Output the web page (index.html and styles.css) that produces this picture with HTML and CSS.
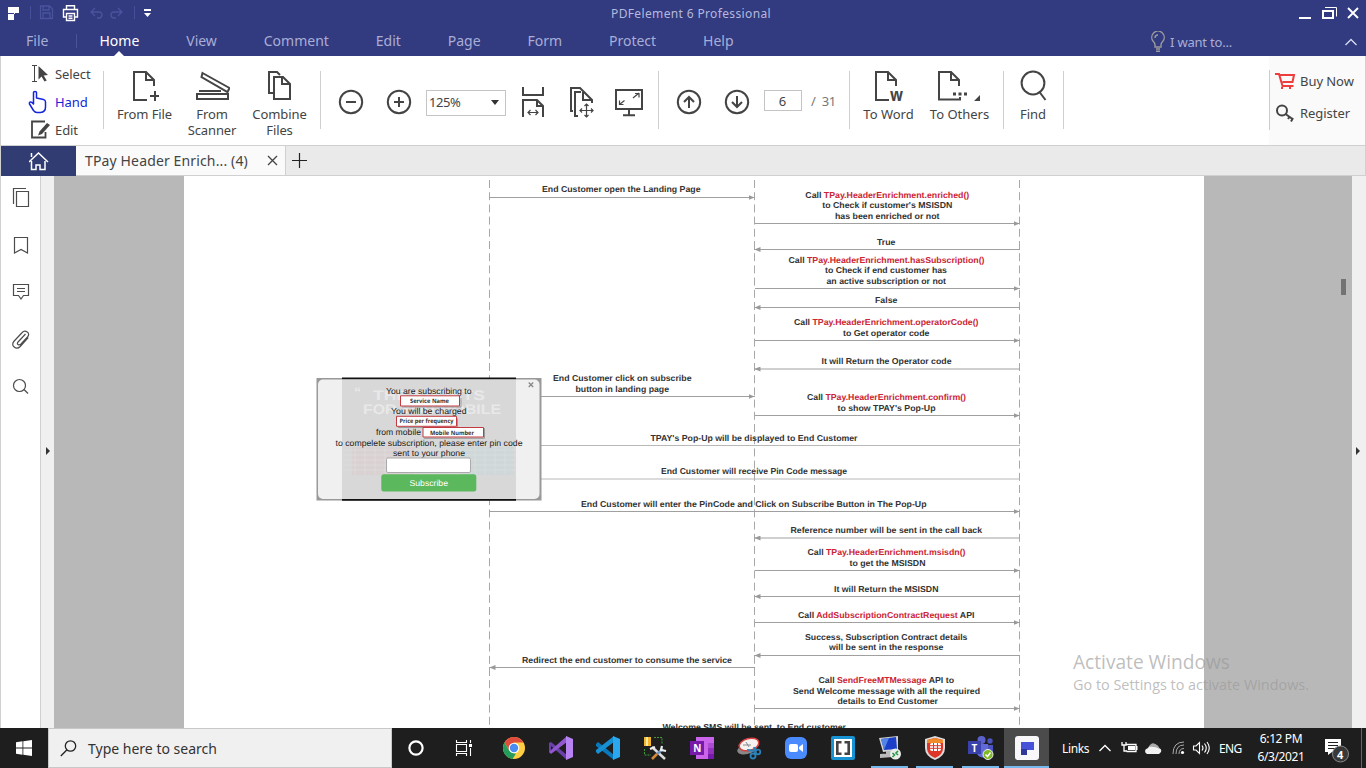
FILE: index.html
```html
<!DOCTYPE html>
<html lang="en">
<head>
<meta charset="utf-8">
<title>PDFelement 6 Professional</title>
<link rel="stylesheet" href="styles.css">
</head>
<body>
<div class="screen">
  <header class="titlebar">
    <svg class="quick" width="160" height="27" viewBox="0 0 160 27">
      <path fill="#fff" d="M8 7h11v6h-5v7H8v-6h7v-1H8z"/>
      <path stroke="#46509a" d="M30.500 6v13M134.500 6v13"/>
      <g fill="none" stroke="#4a549c" stroke-width="1.300"><path d="M40.500 6h9l3 3v9.500h-12zM43 6v4h6V6M43 18v-5h7v5M91 12h8q3 0 3 3t-3 3h-2M95 8l-4 4 4 4M122 12h-8q-3 0-3 3t3 3h2M118 8l4 4-4 4"/></g>
      <g fill="none" stroke="#fff" stroke-width="1.400"><path d="M66.500 9V5.700h8V9M66 17h-2.500V9.500h14V17H75M66.500 13.500h8v7h-8zM68.500 16h4M68.500 18.300h4"/></g>
      <path fill="#fff" d="M144 9h7v2h-7zM144 13h7l-3.500 4z"/>
    </svg>
    <div class="title">PDFelement 6 Professional</div>
    <svg class="winctl" width="68" height="27" viewBox="1298 0 68 27">
      <path fill="#fff" d="M1299 17h12v2h-12z"/>
      <path fill="none" stroke="#fff" stroke-width="2" d="M1323 11h10v7h-10z"/>
      <path fill="none" stroke="#fff" d="M1325 7.500h11.500v9"/>
      <path stroke="#fff" stroke-width="1.900" d="M1348 8l10 10M1358 8l-10 10"/>
    </svg>
  </header>
  <nav class="menubar">
    <span class="menu file">File</span><i class="menu-sep"></i>
    <span class="menu home">Home</span><span class="menu">View</span><span class="menu">Comment</span><span class="menu">Edit</span><span class="menu">Page</span><span class="menu">Form</span><span class="menu">Protect</span><span class="menu">Help</span>
    <div class="want">
      <svg width="16" height="22" viewBox="0 0 16 22"><path fill="none" stroke="#9a9a9a" stroke-width="1.400" d="M5 16v-2q0-2-2-4a6.200 6.200 0 1 1 10 0q-2 2-2 4v2zM5 7q0-3 3-3M6 18h4M6 20.300h4"/></svg>
      <span>I want to...</span>
    </div>
    <svg class="fold" width="14" height="8" viewBox="0 0 14 8"><path fill="none" stroke="#d8daec" stroke-width="1.400" d="M1.500 7 7 1.500 12.500 7"/></svg>
  </nav>

  <section class="ribbon">
    <div class="group modes">
      <div class="mode"><svg width="22" height="20" viewBox="28 64 22 20"><path fill="none" stroke="#444" d="M32 65.500h5M34.500 65.500v16M32 81.500h5"/><path fill="#444" d="M38.500 66l9.500 9-4.300.5 3 5-2.200 1-3-5-3 3z"/></svg>Select</div>
      <div class="mode active"><svg width="22" height="24" viewBox="28 90 22 24"><path fill="none" stroke="#1426d8" stroke-width="1.500" stroke-linejoin="round" d="M33.500 104V92.500q0-1 1.500-1t1.500 1V98l7 1.500q2 .5 2 2.500v5q0 5-5 5.500H37q-2 0-3.500-2l-4-6.500q-.5-2 1-2t3 2z"/></svg>Hand</div>
      <div class="mode"><svg width="22" height="20" viewBox="28 120 22 20"><path fill="none" stroke="#444" stroke-width="1.800" d="M45 121.500H32v16h13.500V132"/><path fill="#444" d="M47 123l3 2-8 9-4 1.500 1.500-4z"/></svg>Edit</div>
    </div>
    <div class="group create">
      <div class="tool"><svg width="28" height="32" viewBox="0 0 28 32"><path fill="none" stroke="#444" stroke-width="2" d="M16 30H3V2h12l8 8v6M15 2v8h8M24 21v10M19 26h10"/></svg><span>From File</span></div>
      <div class="tool"><svg width="36" height="32" viewBox="194 70 36 32"><path fill="none" stroke="#444" stroke-width="2" d="M197 94h31v5h-31zM199 91h22M202.500 73l27 15-2 4-26-15z"/></svg><span>From<br>Scanner</span></div>
      <div class="tool"><svg width="26" height="32" viewBox="267 70 26 32"><path fill="none" stroke="#444" stroke-width="2" d="M273 93h-4V72h8l3 3M274 77h9l7 7v15h-16zM282 77v7h8"/></svg><span>Combine<br>Files</span></div>
    </div>
    <div class="group zoom">
      <svg width="26" height="26" viewBox="0 0 26 26"><circle class="ln" cx="13" cy="13" r="11.200"/><path class="ln" d="M8 13h10"/></svg>
      <svg class="plus" width="26" height="26" viewBox="0 0 26 26"><circle class="ln" cx="13" cy="13" r="11.200"/><path class="ln" d="M8 13h10M13 8v10"/></svg>
      <div class="combo"><span>125%</span><svg width="8" height="5" viewBox="0 0 8 5"><path fill="#333" d="M0 0h8L4 5z"/></svg></div>
      <svg class="fit" width="32" height="34" viewBox="517 85 32 34"><path class="ln" d="M523 87v8h20v-8M523 117v-17h14l6 6v11M537 100v6h6"/><path class="thin" d="M528 112.500h10M530.500 110l-2.500 2.500 2.500 2.500M535.500 110l2.500 2.500-2.500 2.500"/></svg>
      <svg class="page-fit" width="32" height="34" viewBox="565 85 32 34"><path class="ln" d="M573 111h-2V88h9l12 12v3M578 116h-3V92h6M583 92v8h8"/><path class="thin" d="M580 110.500h13M586.500 104v13M582 108.500l-2 2 2 2M591 108.500l2 2-2 2M584.500 106l2-2 2 2M584.500 115l2 2 2-2"/></svg>
      <svg class="page-fit" width="32" height="34" viewBox="613 85 32 34"><path class="ln" d="M616 90h26v19h-26zM629 109v6M623 115.200h12"/><path class="thin" d="M619.500 104.500l5-4M619.500 100.500v4h4M633 98l6-5M635 93.500h4v4"/></svg>
    </div>
    <div class="group pages">
      <svg width="26" height="26" viewBox="0 0 26 26"><circle class="ln" cx="13" cy="13" r="11.200"/><path class="ln" d="M13 19V8M8 13l5-5 5 5"/></svg>
      <svg class="plus" width="26" height="26" viewBox="0 0 26 26"><circle class="ln" cx="13" cy="13" r="11.200"/><path class="ln" d="M13 7v11M8 13l5 5 5-5"/></svg>
      <div class="pageno">6</div><span class="total">/&nbsp; 31</span>
    </div>
    <div class="group convert">
      <div class="tool"><svg width="30" height="32" viewBox="0 0 30 32"><path class="ln" d="M15 30H2V2h12l8 8v6M14 2v8h8"/><text class="w" x="16" y="30.500" textLength="13" lengthAdjust="spacingAndGlyphs">w</text></svg><span>To Word</span></div>
      <div class="tool"><svg width="44" height="32" viewBox="1 0 44 32"><path class="ln" d="M23 27v2.500H2V2h12l8 8v6M14 2v8h8"/><path fill="#444" d="M16 22.500h3v3h-3zM21.500 22.500h3v3h-3zM27 22.500h3v3h-3zM43 25v6h-6z"/></svg><span>To Others</span></div>
    </div>
    <div class="group find">
      <div class="tool"><svg width="30" height="32" viewBox="0 0 30 32"><circle class="ln" cx="15" cy="13" r="11.400"/><path class="ln" d="M21.500 22l6 8"/></svg><span>Find</span></div>
    </div>
    <aside class="account">
      <div class="acct"><svg width="21" height="18" viewBox="1275 72 21 18"><path fill="none" stroke="#ee3d3d" stroke-width="2" d="M1275 74h4l3.500 12h11M1280 75h14l-1.500 7h-10"/><path fill="#ee3d3d" d="M1281 87h2v2h-2zM1289 87h2v2h-2z"/></svg>Buy Now</div>
      <div class="acct"><svg width="21" height="18" viewBox="1275 103 21 18"><circle fill="none" stroke="#444" stroke-width="2" cx="1282" cy="109.500" r="5"/><path fill="none" stroke="#444" stroke-width="2" d="M1285.500 113l7 5M1288 118l2-3M1291 120.500l2-3.500"/></svg>Register</div>
    </aside>
  </section>

  <div class="tabs">
    <div class="home-tab"><svg width="20" height="19" viewBox="29 152 20 19"><path fill="none" stroke="#fff" stroke-width="1.500" d="M29 162l9.500-9 9.500 9M31.500 161v8.500h4.500V165h4v4.500h5V161M31.500 157v-4"/></svg></div>
    <div class="doc-tab"><span>TPay Header Enrich... (4)</span><svg width="11" height="11" viewBox="0 0 11 11"><path stroke="#444" stroke-width="1.300" d="M1 1l9 9M10 1l-9 9"/></svg></div>
    <svg class="new-tab" width="15" height="15" viewBox="0 0 15 15"><path stroke="#222" stroke-width="1.200" d="M7.500 0v15M0 7.500h15"/></svg>
  </div>

  <main class="workspace">
    <div class="sidebar">
      <svg width="39" height="240" viewBox="1 176 39 240">
        <g fill="none" stroke="#4c4c4c" stroke-width="1.200">
          <path d="M13.500 204v-15.500H26M16.500 191.500h12v15h-12z"/>
          <path d="M14.500 237.500h13v15.500l-6.500-3.500-6.500 3.500z"/>
          <path d="M13.500 284.500h15v11h-5L21 299l-2.500-3.500h-5zM17 288.500h8M17 291.500h8"/>
          <path d="M25.500 334l-7 7.500q-2 2-.5 3t3-.5l6.500-7q2.500-3-.3-5t-5 .5l-8 8.500q-3 3.500 0 6t6-.5l8-9"/>
          <circle cx="19.500" cy="385.500" r="6"/><path d="M24 389.500l4 4"/>
        </g>
      </svg>
    </div>
    <div class="strip left"><svg width="4" height="8" viewBox="0 0 4 8"><path fill="#333" d="M0 0l4 4-4 4z"/></svg></div>
    <div class="canvas">
      <svg class="page" width="1020" height="552" viewBox="184 176 1020 552">
        <defs>
          <marker id="head" viewBox="0 0 6 5" refX="6.500" refY="2.500" markerWidth="6" markerHeight="5" markerUnits="userSpaceOnUse" orient="auto"><path fill="#999" d="M0 0l6 2.500L0 5z"/></marker>
        </defs>
        <path class="life" d="M489.500 180v548M754.500 180v548M1019.500 180v548"/>
        <g class="msg">
          <path d="M489 197.500h266"/><path d="M755 223.500h265"/><path d="M1020 249.500H754"/><path d="M755 288.500h265"/><path d="M1020 307.500H754"/><path d="M755 340.500h265"/><path d="M1020 369H754"/><path d="M541 396.500h214"/><path d="M755 415.500h265"/><path d="M489 511.500h531"/><path d="M1020 538H754"/><path d="M755 570.500h265"/><path d="M1020 596.500H754"/><path d="M755 622.500h265"/><path d="M1020 655.500H754"/><path d="M755 667.500H489"/><path d="M755 708.500h265"/>
        </g>
        <path class="plain" d="M541 445.500h479M541 479h479"/>
        <g class="label">
          <text x="542" y="192.300" textLength="158.500" lengthAdjust="spacingAndGlyphs">End Customer open the Landing Page</text>
          <text x="805.300" y="197.600" textLength="164" lengthAdjust="spacingAndGlyphs">Call <tspan>TPay.HeaderEnrichment.enriched()</tspan></text>
          <text x="822.300" y="208.100" textLength="130" lengthAdjust="spacingAndGlyphs">to Check if customer's MSISDN</text>
          <text x="835" y="218.600" textLength="104.500" lengthAdjust="spacingAndGlyphs">has been enriched or not</text>
          <text x="877" y="244.600" textLength="18.500" lengthAdjust="spacingAndGlyphs">True</text>
          <text x="788.500" y="262.700" textLength="196" lengthAdjust="spacingAndGlyphs">Call <tspan>TPay.HeaderEnrichment.hasSubscription()</tspan></text>
          <text x="825" y="273.300" textLength="122" lengthAdjust="spacingAndGlyphs">to Check if end customer has</text>
          <text x="826.500" y="283.800" textLength="119.500" lengthAdjust="spacingAndGlyphs">an active subscription or not</text>
          <text x="875" y="303" textLength="22.500" lengthAdjust="spacingAndGlyphs">False</text>
          <text x="794" y="325.200" textLength="184.500" lengthAdjust="spacingAndGlyphs">Call <tspan>TPay.HeaderEnrichment.operatorCode()</tspan></text>
          <text x="843" y="335.700" textLength="86.500" lengthAdjust="spacingAndGlyphs">to Get operator code</text>
          <text x="821.500" y="364.100" textLength="130" lengthAdjust="spacingAndGlyphs">It will Return the Operator code</text>
          <text x="553" y="381" textLength="138.500" lengthAdjust="spacingAndGlyphs">End Customer click on subscribe</text>
          <text x="575.500" y="391.500" textLength="93.500" lengthAdjust="spacingAndGlyphs">button in landing page</text>
          <text x="807" y="400" textLength="159" lengthAdjust="spacingAndGlyphs">Call <tspan>TPay.HeaderEnrichment.confirm()</tspan></text>
          <text x="837.500" y="410.500" textLength="98" lengthAdjust="spacingAndGlyphs">to show TPAY's Pop-Up</text>
          <text x="650.500" y="441" textLength="207" lengthAdjust="spacingAndGlyphs">TPAY's Pop-Up will be displayed to End Customer</text>
          <text x="661" y="474.200" textLength="186" lengthAdjust="spacingAndGlyphs">End Customer will receive Pin Code message</text>
          <text x="581" y="506.700" textLength="345.500" lengthAdjust="spacingAndGlyphs">End Customer will enter the PinCode and Click on Subscribe Button in The Pop-Up</text>
          <text x="790.500" y="533.200" textLength="191.500" lengthAdjust="spacingAndGlyphs">Reference number will be sent in the call back</text>
          <text x="807.500" y="555.100" textLength="158" lengthAdjust="spacingAndGlyphs">Call <tspan>TPay.HeaderEnrichment.msisdn()</tspan></text>
          <text x="849.500" y="565.700" textLength="76" lengthAdjust="spacingAndGlyphs">to get the MSISDN</text>
          <text x="834" y="592" textLength="104.500" lengthAdjust="spacingAndGlyphs">It will Return the MSISDN</text>
          <text x="798" y="618" textLength="176.500" lengthAdjust="spacingAndGlyphs">Call <tspan>AddSubscriptionContractRequest</tspan> API</text>
          <text x="805" y="640" textLength="162.500" lengthAdjust="spacingAndGlyphs">Success, Subscription Contract details</text>
          <text x="829" y="650.400" textLength="114.500" lengthAdjust="spacingAndGlyphs">will be sent in the response</text>
          <text x="522" y="662.900" textLength="210" lengthAdjust="spacingAndGlyphs">Redirect the end customer to consume the service</text>
          <text x="818.500" y="683" textLength="135.500" lengthAdjust="spacingAndGlyphs">Call <tspan>SendFreeMTMessage</tspan> API to</text>
          <text x="793" y="693.600" textLength="187" lengthAdjust="spacingAndGlyphs">Send Welcome message with all the required</text>
          <text x="837.500" y="704.100" textLength="100.500" lengthAdjust="spacingAndGlyphs">details to End Customer</text>
          <text x="662.500" y="730.100" textLength="183.500" lengthAdjust="spacingAndGlyphs">Welcome SMS will be sent&nbsp; to End customer</text>
        </g>
        <g class="popup">
          <path fill="#999" d="M316.500 378h225v122.500h-225z"/>
          <path fill="#111" d="M342 377.500h174v123.300H342z"/>
          <rect fill="#f0f0f0" x="318" y="379.500" width="221.500" height="119.500" rx="5"/>
          <path fill="#d8d8d8" d="M342 379.500h174V499H342z"/>
          <path fill="#e0c8c8" opacity=".35" d="M352 447h62v28h-62z"/><path fill="#b8d4d8" opacity=".3" d="M460 447h54v28h-54z"/>
          <path fill="none" stroke="#eee" stroke-width=".6" opacity=".5" d="M343 450h172M343 455h172M343 460h172M343 465h172M343 470h172M355 447v27M365 447v27M375 447v27M385 447v27M475 447v27M485 447v27M495 447v27M505 447v27"/>
          <text class="ghost" x="373" y="400" textLength="112" lengthAdjust="spacingAndGlyphs">THE SPORTS</text><text class="ghost" x="363" y="414" textLength="138" lengthAdjust="spacingAndGlyphs">FOR YOU MOBILE</text><text class="ghost" x="354" y="397">“</text>
          <text x="386" y="393.500" textLength="85.500" lengthAdjust="spacingAndGlyphs">You are subscribing to</text>
          <text x="391" y="414.200" textLength="75.500" lengthAdjust="spacingAndGlyphs">You will be charged</text>
          <text x="376" y="435.200" textLength="45" lengthAdjust="spacingAndGlyphs">from mobile</text>
          <text x="335.500" y="445.500" textLength="187" lengthAdjust="spacingAndGlyphs">to compelete subscription, please enter pin code</text>
          <text x="393" y="455.600" textLength="72" lengthAdjust="spacingAndGlyphs">sent to your phone</text>
          <path fill="none" stroke="#999" d="M402 407h59v-9M398 427.500h59.500v-9M424 438.300h60.500v-10"/>
          <path fill="#fff" stroke="#c33b40" d="M400.500 395.800h59v10.200h-59zM396.500 416.300h60v10h-60zM423 427.500h60.500v9.500H423z"/>
          <g class="tag"><text x="410" y="403.300" textLength="39" lengthAdjust="spacingAndGlyphs">Service Name</text><text x="399.500" y="423.300" textLength="54" lengthAdjust="spacingAndGlyphs">Price per frequency</text><text x="430" y="434.600" textLength="44" lengthAdjust="spacingAndGlyphs">Mobile Number</text></g>
          <rect fill="#fff" stroke="#aaa" x="386.500" y="458" width="84" height="14.500" rx="1.500"/>
          <rect fill="#5cb85c" x="381.300" y="474.300" width="95" height="17.300" rx="2.500"/>
          <text class="btn" x="409.500" y="486" textLength="38.500" lengthAdjust="spacingAndGlyphs">Subscribe</text>
          <path stroke="#888" stroke-width="1.300" d="M528.700 382.500l4.500 4.500M533.200 382.500l-4.500 4.500"/>
        </g>
      </svg>
      <div class="thumb"></div>
    </div>
    <div class="strip right"><svg width="4" height="8" viewBox="0 0 4 8"><path fill="#333" d="M0 0l4 4-4 4z"/></svg></div>
    <div class="watermark"><svg width="250" height="50" viewBox="1070 648 250 50"><text class="big" x="1073" y="669" textLength="157" lengthAdjust="spacingAndGlyphs">Activate Windows</text><text x="1073" y="690" textLength="236" lengthAdjust="spacingAndGlyphs">Go to Settings to activate Windows.</text></svg></div>
  </main>

  <footer class="taskbar">
    <div class="start"><svg width="16" height="16" viewBox="0 0 16 16"><path fill="#fff" d="M0 2.300 6.500 1.300V7.600H0zM7.300 1.200 16 0v7.600H7.300zM0 8.400h6.500v6.300L0 13.700zM7.300 8.400H16V16l-8.700-1.200z"/></svg></div>
    <div class="search"><svg width="17" height="17" viewBox="0 0 17 17"><circle fill="none" stroke="#222" stroke-width="1.300" cx="10.500" cy="6" r="5.200"/><path stroke="#222" stroke-width="1.300" d="M7 9.700.8 16"/></svg><span>Type here to search</span></div>
    <div class="cell sys"><svg width="18" height="18" viewBox="0 0 18 18"><circle fill="none" stroke="#fff" stroke-width="2.200" cx="9" cy="9" r="6.600"/></svg></div>
    <div class="cell sys"><svg width="18" height="16" viewBox="0 0 18 16"><path fill="none" stroke="#fff" stroke-width="1.100" d="M1.500 0v2.500h10V0M1.500 4.500h10v7h-10zM1.500 16v-2.500h10V16M15.500 0v3M15.500 8v8"/><path fill="#fff" d="M14 4h3v3h-3z"/></svg></div>
    <div class="cell first"><svg width="24" height="24" viewBox="0 0 24 24"><circle cx="12" cy="12" r="11" fill="#ffce43"/><path fill="#df4b3c" d="M2.500 6.500A11 11 0 0 1 21.500 6.500H12L7.500 14.500z"/><path fill="#249c5b" d="M2.500 6.500l5 8.500 4.500 2.500h2L10.500 23A11 11 0 0 1 2.500 6.500"/><circle cx="12" cy="12" r="5.300" fill="#fff"/><circle cx="12" cy="12" r="4.200" fill="#4b8bf4"/></svg></div>
    <div class="cell"><svg width="24" height="24" viewBox="0 0 24 24"><path fill="#6b3fa8" d="M0 7l2-1 16 13v5L2 10v7l-2-1z"/><path fill="#9057d0" d="M0 16l2 2L18 6V0L2 14z"/><path fill="#b783f2" d="M17 0l7 3v18l-7 3z"/><path fill="#1e1e1e" d="M11 12l6-5v10z"/></svg></div>
    <div class="cell"><svg width="24" height="24" viewBox="0 0 24 24"><path fill="#0879bd" d="M0 8l2-2 16 13v5L0 10z"/><path fill="#168fd3" d="M0 16l2 2L18 6V0L0 14z"/><path fill="#2aa8ef" d="M17 0l7 3v18l-7 3z"/><path fill="#1e1e1e" d="M11 12l6-5v10z"/></svg></div>
    <div class="cell"><svg width="24" height="24" viewBox="0 0 24 24"><path fill="#f3b52c" d="M1 1h7v9H1z"/><path fill="#ffe8a0" d="M3 1h2v9H3z"/><path fill="none" stroke="#3f9c38" stroke-dasharray="2 1" d="M11 1.500h8V8M1.500 13v6H8"/><path stroke="#ddd" stroke-width="2.500" d="M9 11l13 12"/><path stroke="#6c94c4" stroke-width="2.500" d="M20 13l-6 5"/><path stroke="#d68b3a" stroke-width="2.500" d="M14 18l-5 5"/><path fill="none" stroke="#eee" stroke-width="2.200" d="M7 13l5-2M19 10l-1 4 5 1"/></svg></div>
    <div class="cell"><svg width="24" height="24" viewBox="0 0 24 24"><path fill="#ca64ea" d="M6 1h18v22H6z"/><path fill="#ae4bd5" d="M18 7h6v5h-6z"/><path fill="#9332bf" d="M18 12h6v6h-6z"/><path fill="#7719aa" d="M0 5h14v14H0z"/><path fill="#7719aa" d="M18 18h6v5h-6z"/><text class="letter" x="3.200" y="15.800">N</text></svg></div>
    <div class="cell"><svg width="24" height="24" viewBox="0 0 24 24"><ellipse cx="10" cy="13" rx="10" ry="5" fill="#888" transform="rotate(-15 10 13)"/><ellipse cx="12" cy="8.500" rx="10" ry="6" fill="#f6f2f2" stroke="#d94141" stroke-width="1.500" transform="rotate(-15 12 8.500)"/><path stroke="#888" d="M6 9h8M9 6l3 5"/><g fill="none" stroke="#2c82ba" stroke-width="1.800"><circle cx="16" cy="20" r="2.500"/><circle cx="21" cy="16" r="2.300"/><path d="M10 14l9 1M18 18l-1-7"/></g></svg></div>
    <div class="cell"><svg width="24" height="24" viewBox="0 0 24 24"><rect x="1" y="1" width="22" height="22" rx="6" fill="#4a8cff"/><rect x="5" y="8" width="9" height="8" rx="2" fill="#fff"/><path fill="#fff" d="M15 11l4-3v8l-4-3z"/></svg></div>
    <div class="cell"><svg width="24" height="24" viewBox="0 0 24 24"><rect width="24" height="24" rx="2" fill="#1793d4"/><path fill="#fff" d="M3 3h18v18H3z"/><path fill="none" stroke="#444" stroke-width="2.600" d="M10.500 6.300H6.300v11.400h4.200M13.500 6.300h4.200v11.400h-4.200"/></svg></div>
    <div class="cell run"><svg width="24" height="24" viewBox="0 0 24 24"><path fill="#d4d4d4" d="M1 2l19-2v14L5 16z"/><path fill="#1b3fc8" d="M3 3l15-2 1 12-13 1z"/><path fill="#5484e4" d="M3 3l8-1-5 12z"/><path fill="#bbb" d="M8 15h7v4H8zM2 18l12-1 1 4-13 1z"/><circle cx="17.500" cy="18" r="5.500" fill="#e8eee8"/><path fill="none" stroke="#27964a" stroke-width="1.600" d="M14.500 17l2 2-2 2M20 15l-2 2 2 2"/></svg></div>
    <div class="cell run narrow"><svg width="22" height="24" viewBox="0 0 22 24"><path fill="#ddd" d="M11 0l10 3v9q0 8-10 12Q1 20 1 12V3z"/><path fill="#df3528" d="M11 2l8 2v8q0 7-8 10-8-3-8-10V4z"/><path fill="#f18a2b" d="M11 2l8 2v3H3V4z"/><rect x="6" y="7" width="11" height="8" rx="2" fill="#fff"/><path stroke="#df3528" d="M6 9.700h11M6 12.300h11M9.500 7v8M13.500 7v8"/></svg></div>
    <div class="cell run"><svg width="26" height="24" viewBox="0 0 26 24"><circle cx="13.500" cy="4" r="4" fill="#5b62cc"/><circle cx="22" cy="5" r="2.700" fill="#4b53bc"/><path fill="#6269d8" d="M9 8h11v12q-7 4-11-2z"/><path fill="#4b53bc" d="M20 9h5v9h-5z"/><path fill="#3941ab" d="M0 5h13v13H0z"/><text class="letter" x="3.500" y="15.500">T</text><circle cx="20" cy="18.500" r="5" fill="#7fba22" stroke="#eee"/><path fill="none" stroke="#fff" stroke-width="1.500" d="M17.500 18.500l2 2 3-4"/></svg></div>
    <div class="cell current"><svg width="24" height="24" viewBox="0 0 24 24"><rect width="24" height="24" rx="3" fill="#f8f8fb"/><path fill="#4652d8" d="M6 6h13v8H6z"/><path fill="#303899" d="M6 13h6v6H6z"/></svg></div>
    <div class="tray">
      <span class="links">Links</span>
      <svg class="icons" width="120" height="24" viewBox="1095 736 120 24"><g fill="none" stroke="#fff" stroke-width="1.300"><path d="M1099.500 751l5.500-5.500 5.500 5.500"/><path d="M1126 744.500h10v7h-9.500M1122 742v3h4v-3M1124 745v6h3"/><path stroke-width="1.100" d="M1193.500 746h2.500l3.500-3.500v11l-3.500-3.500h-2.500zM1202 745.500q2 2.500 0 5M1204.500 743.500q3.500 4.500 0 9M1207 742q4.500 6 0 12"/></g><path fill="#fff" d="M1128 746h7v4h-7zM1136 746h1.500v4h-1.500z"/><path fill="#f1f1f1" d="M1147 754q-2-1-2-3t3-3q2-4 6-4 4 1 5 4 3 1 2 4l-2 2z"/><path fill="#aaa" d="M1149 747q3-7 9-1l2 3q-6-3-11-2"/><g fill="none" stroke="#aaa"><path d="M1173 754q0-12 11-12M1176 754q0-9 8-9M1179 754q0-5.500 5-5.500"/></g><circle cx="1182.500" cy="752.500" r="1.600" fill="#fff"/></svg>
      <span class="lang">ENG</span>
      <div class="clock"><span>6:12 PM</span><span class="date">6/3/2021</span></div>
      <svg class="notice" width="26" height="28" viewBox="1324 737 26 28"><path fill="#fff" d="M1325 740h16v13h-9l-4 3v-3h-3z"/><path stroke="#222" d="M1328 743.500h10M1328 746.500h10M1328 749.500h7"/><circle cx="1340.500" cy="755" r="8" fill="#383838" stroke="#888"/><text class="count" x="1337" y="759.500">4</text></svg>
      <i class="peek"></i>
    </div>
  </footer>
</div>
</body>
</html>
```
FILE: styles.css
```css
* { box-sizing: border-box; }
body { margin: 0; font-family: "Noto Sans", "Open Sans", sans-serif; color: #444; }
svg { display: block; flex: none; }
.screen { width: 1366px; height: 768px; display: flex; flex-direction: column; overflow: hidden; background: #fff; }

.titlebar { height: 27px; flex: none; display: flex; justify-content: space-between; background: #323a80; position: relative; }
.title { position: absolute; left: 0; right: 0; margin: 0 auto; width: 200px; padding-left: 16px; text-align: center; font-size: 12px; line-height: 27px; color: #b4b9de; white-space: nowrap; letter-spacing: .36px; }

.menubar { height: 29px; flex: none; display: flex; background: #323a80; color: #a9aed6; font-size: 14px; line-height: 28px; }
.menu { margin-right: 46.900px; white-space: nowrap; }
.file { margin: 0 0 0 26px; width: 50px; }
.menu-sep { width: 1px; height: 14px; margin: 7px 22.500px 0 0; background: #4a5299; }
.home { color: #fff; position: relative; }
.home::after { content: ""; position: absolute; left: 50%; bottom: 0; margin-left: -5px; border: 5px solid transparent; border-top: 0; border-bottom-color: #fff; }
.want { margin-left: auto; width: 194px; display: flex; font-size: 13px; line-height: 30px; gap: 4px; letter-spacing: -.2px; }
.want svg { margin-top: 4px; }
.fold { margin: 11px 8px 0 0; }

.ribbon { height: 89px; flex: none; display: flex; border-left: 1px solid #d0d0d0; border-right: 1px solid #d0d0d0; background: #fff; font-size: 13px; line-height: 16px; }
.group { display: flex; position: relative; flex: none; }
.group::after { content: ""; position: absolute; right: 0; top: 15px; width: 1px; height: 58px; background: #cfcfcf; }
.modes { width: 103px; flex-direction: column; padding: 4px 0 0 27px; letter-spacing: -.1px; }
.mode { height: 28px; display: flex; align-items: center; gap: 5px; }
.active { color: #1426d8; }
.create { width: 217px; display: grid; grid-template-columns: 81px 54px 81px; }
.tool { display: flex; flex-direction: column; align-items: center; padding-top: 14px; text-align: center; white-space: nowrap; gap: 4px; }
.create .tool { letter-spacing: -.1px; }
.ln { fill: none; stroke: #444; stroke-width: 2; }
.thin { fill: none; stroke: #444; stroke-width: 1.200; }
.w { font: bold 17px "Noto Sans", sans-serif; fill: #444; }
.zoom { width: 338px; padding: 33px 0 0 17px; }
.plus { margin-left: 22px; }
.combo { width: 80px; height: 26px; margin: 1px 11px 0 14px; padding: 0 6px 2px 2px; border: 1px solid #c4c4c4; display: flex; justify-content: space-between; align-items: center; letter-spacing: -.4px; }
.fit, .page-fit { margin-top: -4px; }
.page-fit { margin-left: 16px; }
.pages { width: 191px; padding: 33px 0 0 17px; }
.pageno { width: 38px; height: 21px; margin: 1px 9px 0 14px; border: 1px solid #c4c4c4; text-align: center; line-height: 20px; padding-right: 1px; }
.total { line-height: 24px; color: #777; letter-spacing: -.3px; }
.convert { width: 154px; display: grid; grid-template-columns: 77px 65px; }
.find { width: 60px; justify-content: center; padding-right: 2px; }
.account { margin-left: auto; width: 96px; background: linear-gradient(#ccc, #ccc) 0 14px / 1px 60px no-repeat #fafafa; padding: 9px 0 0 6px; }
.acct { height: 32px; display: flex; align-items: center; gap: 4px; white-space: nowrap; letter-spacing: -.05px; }

.tabs { height: 31px; flex: none; display: flex; background: #eaeaea; border: 1px solid #d0d0d0; }
.home-tab { width: 75px; height: 30px; display: flex; justify-content: center; align-items: center; background: #313c73; }
.doc-tab { width: 210px; display: flex; align-items: center; justify-content: space-between; padding: 0 7px 0 9px; background: #fafafa; border-right: 1px solid #d0d0d0; font-size: 14px; letter-spacing: .14px; white-space: nowrap; }
.new-tab { margin: 7px 0 0 6px; }

.workspace { height: 552px; flex: none; display: flex; position: relative; border-left: 1px solid #d0d0d0; }
.sidebar { width: 40px; border-right: 1px solid #d0d0d0; flex: none; }
.strip { width: 13px; padding: 271px 0 0 5px; background: #f0f0f0; flex: none; }
.right { width: 14px; padding-left: 4px; }
.canvas { flex: 1; display: flex; justify-content: space-between; background: #b8b8b8; padding: 0 6px 0 130px; }
.page { background: #fff; overflow: hidden; }
.thumb { width: 5px; height: 16px; margin-top: 103px; background: #737373; }
.life { fill: none; stroke: #a8a8a8; stroke-dasharray: 8 4.200; }
.msg path { fill: none; stroke: #a0a0a0; marker-end: url(#head); }
.plain { stroke: #b8b8b8; stroke-width: 1.200; }
.label text { font: bold 8.600px "Liberation Sans", Arial, sans-serif; fill: #333; text-rendering: geometricPrecision; }
.label tspan { fill: #cc2535; }
.popup text { font: 8.600px "Liberation Sans", Arial, sans-serif; fill: #222; text-rendering: geometricPrecision; }
.popup .ghost { font-size: 14px; font-weight: bold; fill: #e8e8e8; }
.popup .tag text { font: bold 6px "Open Sans", sans-serif; fill: #333; }
.popup .btn { fill: #fff; }
.watermark { position: absolute; left: 1069px; top: 472px; }
.watermark text { font: 15px "Open Sans", sans-serif; fill: #999; fill-opacity: .65; }
.watermark .big { font-size: 19.500px; }

.taskbar { height: 40px; flex: none; display: flex; background: #1e1e1e; color: #fff; }
.start { width: 48px; display: flex; align-items: center; justify-content: center; }
.search { width: 344px; display: flex; align-items: center; gap: 11px; padding-left: 11px; background: #f0f0f0; border: 1px solid #c8c8c8; color: #333; font-size: 14px; }
.cell { width: 47px; display: flex; align-items: center; justify-content: center; position: relative; }
.sys { width: 48px; }
.first { margin-left: 2px; }
.narrow { width: 44px; }
.current { width: 45px; background: #4b4b4b; }
.run::after, .current::after { content: ""; position: absolute; left: 5px; right: 5px; bottom: 0; height: 2px; background: #76b9ed; }
.narrow::after { left: 3px; right: 4px; }
.current::after { left: 0; right: 0; }
.letter { font: bold 10px "Open Sans", sans-serif; fill: #fff; }
.tray { flex: 1; display: flex; align-items: center; font-size: 12px; white-space: nowrap; }
.links { width: 46px; padding-left: 13px; letter-spacing: -.35px; }
.lang { width: 37px; padding-left: 4px; letter-spacing: -.6px; }
.clock { width: 58px; display: flex; flex-direction: column; align-items: center; line-height: 18px; letter-spacing: -.4px; }
.notice { margin: 4px 0 0 14px; }
.count { font: bold 11px "Open Sans", sans-serif; fill: #fff; }
.peek { width: 1px; height: 40px; margin-left: 11px; background: #666; }
```
